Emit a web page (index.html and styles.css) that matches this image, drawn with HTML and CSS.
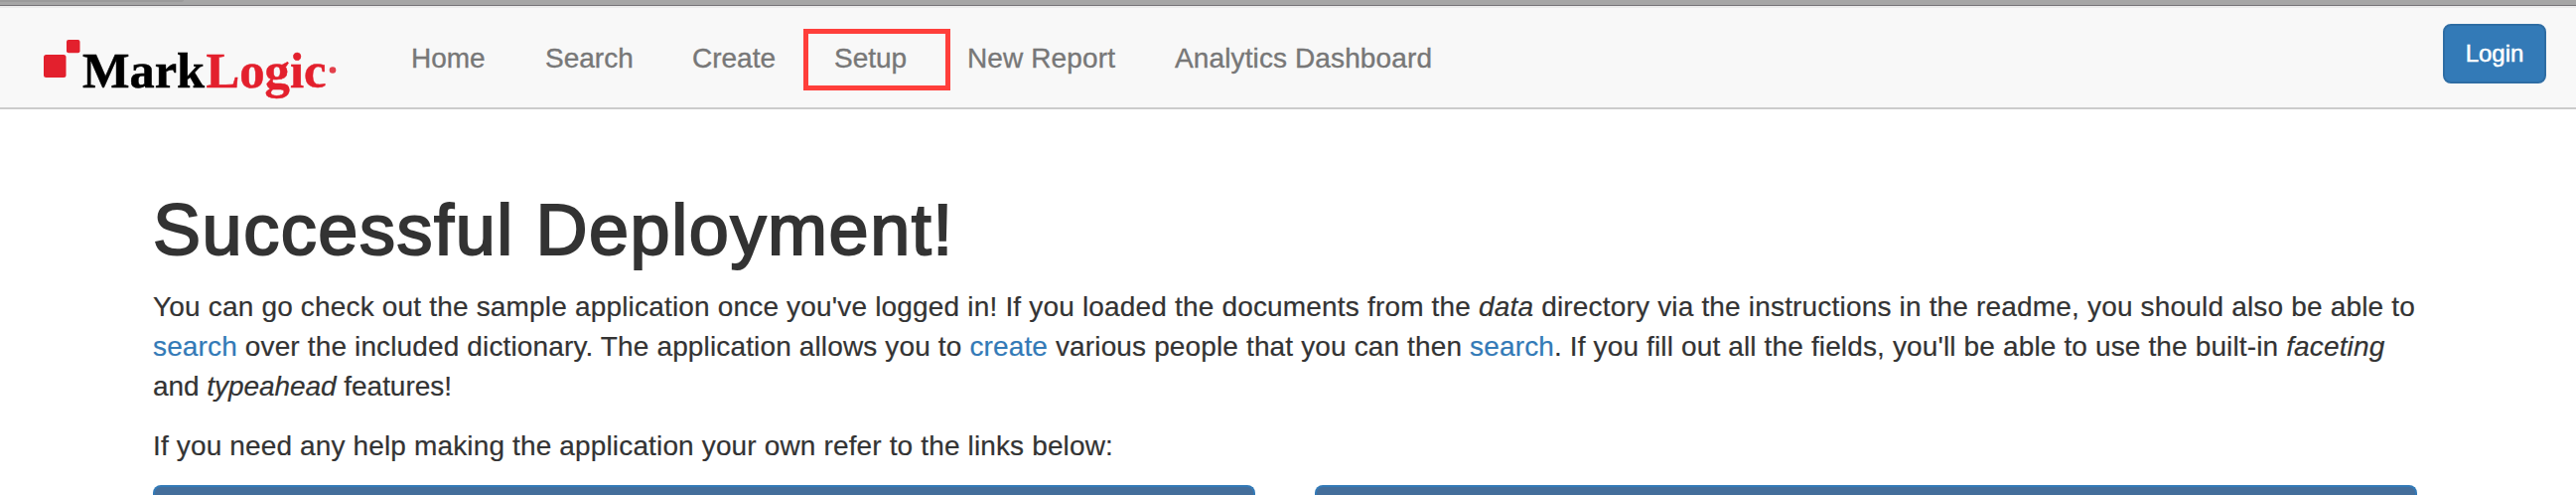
FILE: index.html
```
<!DOCTYPE html>
<html lang="en">
<head>
<meta charset="utf-8">
<title>MarkLogic</title>
<link rel="stylesheet" href="styles.css">
</head>
<body>
<div class="chrome"><div class="chrome-tab"></div></div>
<header class="navbar">
  <a class="brand" href="#">
    <svg width="296" height="60" viewBox="44 40 296 60" role="img" aria-label="MarkLogic">
      <rect x="44" y="55" width="22.5" height="23" rx="2.5" fill="#e3202d"/>
      <rect x="67" y="40" width="13.5" height="13.3" rx="2" fill="#e3202d"/>
      <text class="logo-text" x="83" y="88" textLength="123" lengthAdjust="spacingAndGlyphs">Mark</text>
      <text class="logo-text logo-red" x="207.5" y="88" textLength="121" lengthAdjust="spacingAndGlyphs">Logic</text>
      <circle cx="335" cy="70.5" r="3.3" fill="#e3404b"/>
    </svg>
  </a>
  <nav class="nav">
    <a class="nav-item w-home" href="#">Home</a>
    <a class="nav-item w-search" href="#">Search</a>
    <a class="nav-item w-create" href="#">Create</a>
    <a class="nav-item w-setup" href="#">Setup<span class="highlight"></span></a>
    <a class="nav-item w-report" href="#">New Report</a>
    <a class="nav-item" href="#">Analytics Dashboard</a>
  </nav>
  <button class="login">Login</button>
</header>
<main class="container">
  <h1 class="title">Successful Deployment!</h1>
  <p class="copy">
    <span class="line line-first">You can go check out the sample application once you've logged in! If you loaded the documents from the <em>data</em> directory via the instructions in the readme, you should also be able to</span>
    <span class="line line-second"><a href="#">search</a> over the included dictionary. The application allows you to <a href="#">create</a> various people that you can then <a href="#">search</a>. If you fill out all the fields, you'll be able to use the built-in <em>faceting</em></span>
    <span class="line line-third">and <em>typeahead</em> features!</span>
  </p>
  <p class="copy"><span class="line line-help">If you need any help making the application your own refer to the links below:</span></p>
  <div class="panels">
    <section class="panel"></section>
    <section class="panel"></section>
  </div>
</main>
</body>
</html>
```
FILE: styles.css
```
* { box-sizing: border-box; }
body {
  margin: 0;
  background: #fff;
  color: #333;
  font: 28px/40px "Liberation Sans", Arial, sans-serif;
}
a { color: #337ab7; text-decoration: none; }
.chrome {
  height: 8px;
  background: linear-gradient(#a6a6a6 0 5px, #767478 5px 6px, #ececec 6px 8px);
}
.chrome-tab {
  width: 185px;
  height: 2px;
  background: #9b9b9b;
  border-bottom-right-radius: 3px 2px;
}
.navbar {
  display: flex;
  align-items: flex-start;
  height: 102px;
  padding: 0 30px 0 44px;
  background: #f8f8f8;
  border-bottom: 2px solid #ccc;
}
.brand { width: 339px; padding-top: 32px; }
.brand svg { display: block; }
.logo-text {
  font: bold 50px "Liberation Serif", serif;
  fill: #000;
  stroke: #000;
  stroke-width: 0.5px;
}
.logo-red { fill: #e3202d; stroke: #e3202d; }
.nav { display: flex; flex: 1; }
.nav-item {
  position: relative;
  padding: 31px 30px 29px 31px;
  color: #777;
  -webkit-text-stroke: 0.35px #777;
  white-space: nowrap;
}
.w-home { width: 135px; }
.w-search { width: 148px; }
.w-create { width: 143px; }
.w-setup { width: 135px; }
.w-report { width: 209px; }
.nav-item:nth-child(n+5) { padding-left: 30px; letter-spacing: 0.12px; }
.highlight {
  position: absolute;
  left: 0;
  top: 21px;
  width: 148px;
  height: 62px;
  border: 5px solid #ff3f3b;
}
.login {
  width: 104px;
  height: 60px;
  margin-top: 16px;
  padding: 0;
  border: 2px solid #2e6da4;
  border-radius: 8px;
  background: #337ab7;
  color: #fff;
  font: 24px/34px "Liberation Sans", Arial, sans-serif;
  -webkit-text-stroke: 0.5px #fff;
}
.container { width: 2280px; margin: 0 auto 0 154px; padding-top: 82px; }
.title {
  margin: 0 0 18px;
  font-size: 72px;
  line-height: 79px;
  font-weight: 400;
  letter-spacing: 1.57px;
  -webkit-text-stroke: 2px #333;
  white-space: nowrap;
}
.copy { margin: 0 0 20px; }
.copy:last-of-type { margin-bottom: 19px; }
.line { display: block; width: max-content; white-space: nowrap; -webkit-text-stroke: 0.2px; }
.line-first { letter-spacing: 0.178px; }
.line-second { letter-spacing: 0.14px; }
.line-third { letter-spacing: -0.05px; }
.line-help { letter-spacing: 0.145px; }
.panels { display: grid; grid-template-columns: 1fr 1fr; gap: 60px; }
.panel {
  height: 10px;
  border: 2px solid #337ab7;
  border-bottom: 0;
  border-radius: 8px 8px 0 0;
  background: #446e9b;
}
```
